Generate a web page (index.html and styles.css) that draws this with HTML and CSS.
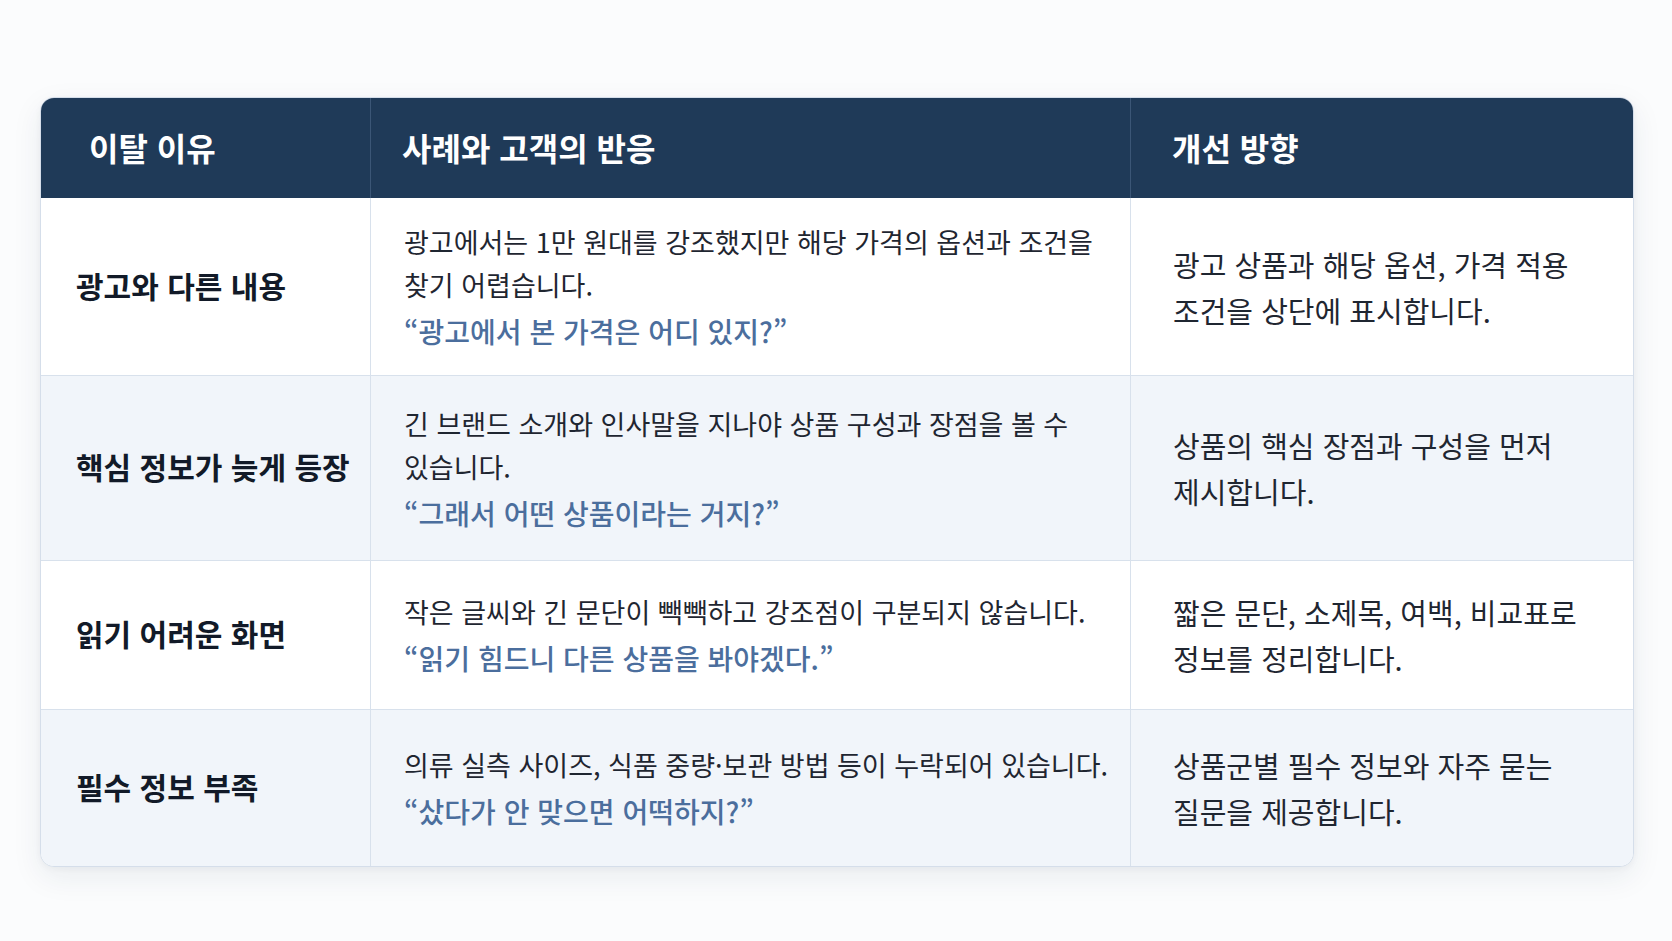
FILE: index.html
```html
<!DOCTYPE html>
<html lang="ko">
<head>
<meta charset="utf-8">
<title>이탈 이유</title>
<link rel="stylesheet" href="styles.css">
</head>
<body>
<main class="page">
  <div class="table">
    <div class="cell head c1">이탈 이유</div>
    <div class="cell head c2">사례와 고객의 반응</div>
    <div class="cell head c3">개선 방향</div>

    <div class="cell label c1 r1">광고와 다른 내용</div>
    <div class="cell case c2 r1">
      <p class="desc">광고에서는 1만 원대를 강조했지만 해당 가격의 옵션과 조건을 찾기 어렵습니다.</p>
      <p class="quote">“광고에서 본 가격은 어디 있지?”</p>
    </div>
    <div class="cell fix c3 r1">광고 상품과 해당 옵션, 가격 적용 조건을 상단에 표시합니다.</div>

    <div class="cell label c1 r2 alt">핵심 정보가 늦게 등장</div>
    <div class="cell case c2 r2 alt">
      <p class="desc">긴 브랜드 소개와 인사말을 지나야 상품 구성과 장점을 볼 수 있습니다.</p>
      <p class="quote">“그래서 어떤 상품이라는 거지?”</p>
    </div>
    <div class="cell fix c3 r2 alt">상품의 핵심 장점과 구성을 먼저 제시합니다.</div>

    <div class="cell label c1 r3">읽기 어려운 화면</div>
    <div class="cell case c2 r3">
      <p class="desc">작은 글씨와 긴 문단이 빽빽하고 강조점이 구분되지 않습니다.</p>
      <p class="quote">“읽기 힘드니 다른 상품을 봐야겠다.”</p>
    </div>
    <div class="cell fix c3 r3">짧은 문단, 소제목, 여백, 비교표로 정보를 정리합니다.</div>

    <div class="cell label c1 r4 alt last">필수 정보 부족</div>
    <div class="cell case c2 r4 alt last">
      <p class="desc">의류 실측 사이즈, 식품 중량·보관 방법 등이 누락되어 있습니다.</p>
      <p class="quote">“샀다가 안 맞으면 어떡하지?”</p>
    </div>
    <div class="cell fix c3 r4 alt last">상품군별 필수 정보와 자주 묻는 질문을 제공합니다.</div>
  </div>
</main>
</body>
</html>
```

FILE: styles.css
```css
* {
  box-sizing: border-box;
}

html, body {
  margin: 0;
  padding: 0;
  background: #fbfcfd;
}

body {
  font-family: "Noto Sans CJK KR", "Noto Sans", sans-serif;
  color: #1d2430;
  word-break: keep-all;
}

.page {
  width: 1672px;
  height: 941px;
  padding-top: 97px;
  padding-left: 40px;
}

.table {
  width: 1594px;
  display: grid;
  grid-template-columns: 330px 760px 1fr;
  grid-template-rows: 100px 178px 185px 149px 156px;
  border: 1px solid #d5deea;
  border-radius: 14px;
  overflow: hidden;
  background: #ffffff;
  box-shadow: 0 10px 30px rgba(25, 45, 75, 0.08), 0 2px 6px rgba(25, 45, 75, 0.04);
}

.cell {
  display: flex;
  flex-direction: column;
  justify-content: center;
  border-bottom: 1px solid #d8e1ec;
  border-right: 1px solid #d8e1ec;
}

.cell.c3 {
  border-right: none;
}

.cell.last {
  border-bottom: none;
}

.cell.alt {
  background: #f1f5fa;
}

.head {
  background: #1f3a58;
  color: #ffffff;
  font-weight: 700;
  font-size: 32px;
  border-bottom: none;
  border-right-color: #3b5676;
  padding-bottom: 2px;
}

.head.c1 {
  padding-left: 48px;
}

.head.c2 {
  padding-left: 31px;
}

.head.c3 {
  padding-left: 41px;
}

.label {
  padding-left: 35px;
  padding-bottom: 4px;
  font-size: 30px;
  font-weight: 700;
  color: #121a28;
}

.case {
  padding-left: 33px;
  padding-right: 4px;
}

.desc {
  margin: 0;
  font-size: 27px;
  line-height: 43px;
  color: #1f2631;
}

.quote {
  margin: 3px 0 0;
  font-size: 28px;
  line-height: 44px;
  font-weight: 500;
  color: #4b6e9d;
}

.fix {
  padding-left: 42px;
  padding-right: 36px;
  font-size: 29px;
  line-height: 46px;
  color: #1f2631;
}
```
